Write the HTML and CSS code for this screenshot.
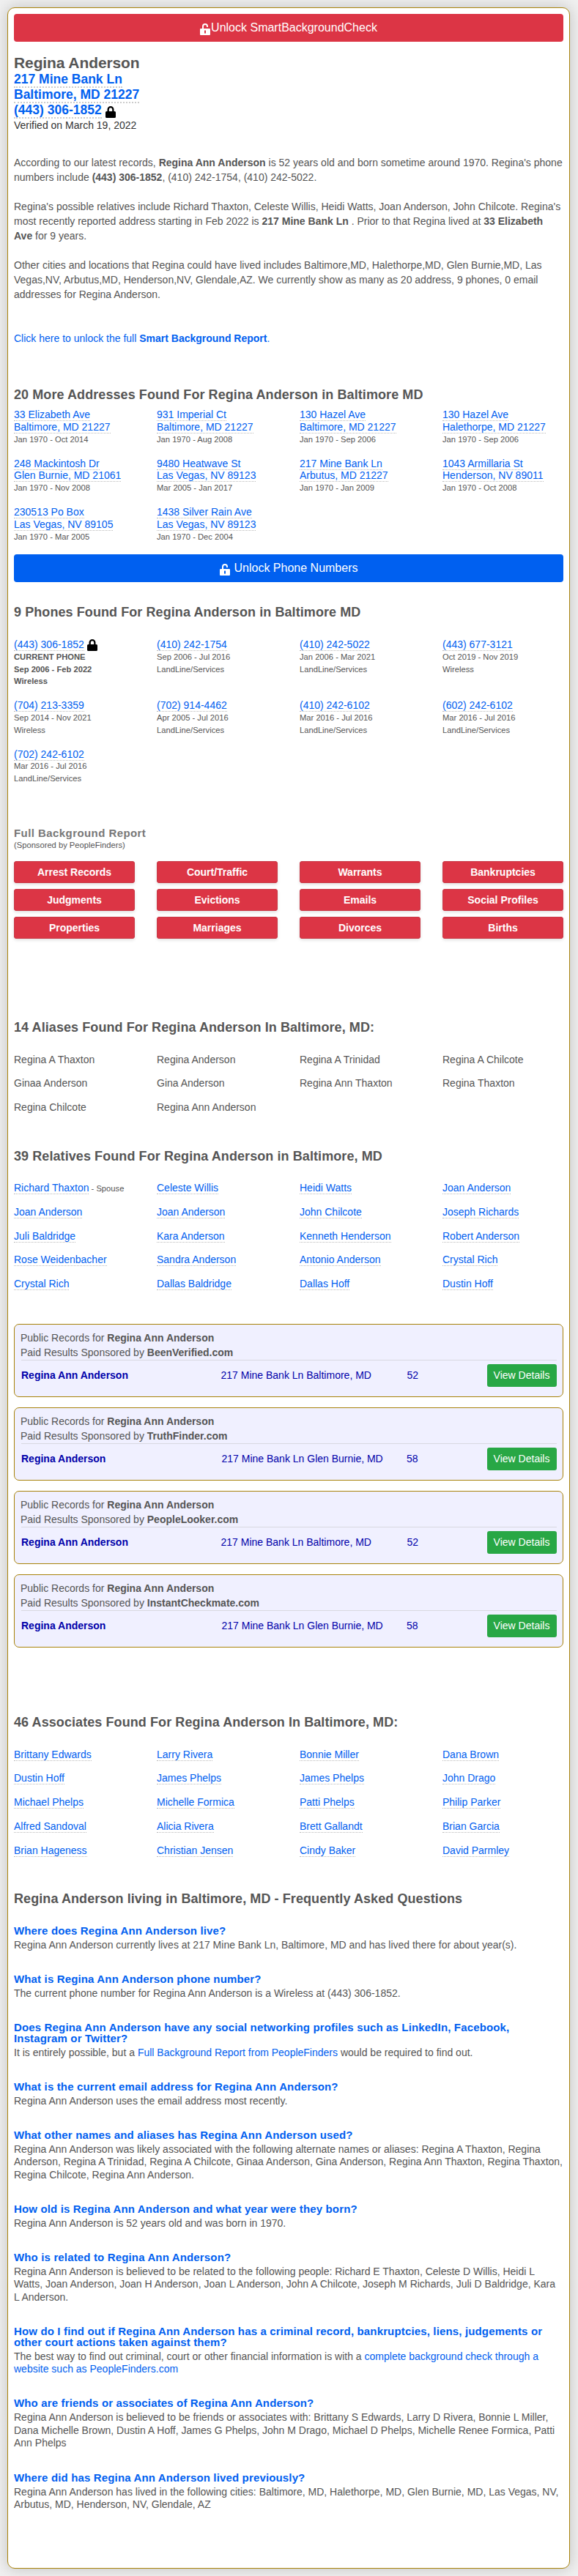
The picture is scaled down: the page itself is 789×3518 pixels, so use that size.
FILE: index.html
```html
<!DOCTYPE html>
<html lang="en">
<head>
<meta charset="utf-8">
<title>Regina Anderson</title>
<link rel="stylesheet" href="styles.css">
</head>
<body>
<svg class="defs" aria-hidden="true">
<symbol id="open" viewBox="0 0 14 16"><path fill="currentColor" fill-rule="evenodd" d="M1 7H3V4A4 4 0 0 1 11 4V5H9V4A2 2 0 0 0 5 4V7H13Q14 7 14 8V15Q14 16 13 16H1Q0 16 0 15V8Q0 7 1 7ZM6 9.5V13.5H8V9.5Z"/></symbol>
<symbol id="closed" viewBox="0 0 14 16"><path fill="currentColor" fill-rule="evenodd" d="M1.5 7H2.5V4.5A4.5 4.5 0 0 1 11.500 4.500V7H12.500Q14 7 14 8.500V14.500Q14 16 12.500 16H1.500Q0 16 0 14.500V8.500Q0 7 1.500 7ZM4.800 7H9.200V4.500A2.200 2.200 0 0 0 4.800 4.500Z"/></symbol>
</svg>
<main class="card">
<a class="bar red"><svg class="lock"><use href="#open"/></svg>Unlock SmartBackgroundCheck</a>
<h1>Regina Anderson</h1>
<div class="contact"><div><a class="dot">217 Mine Bank Ln</a></div><div><a class="dot">Baltimore, MD 21227</a></div><div><a class="dot">(443) 306-1852</a> <svg class="lock black"><use href="#closed"/></svg></div></div>
<div class="verified">Verified on March 19, 2022</div>
<div class="bio">
<p>According to our latest records, <b>Regina Ann Anderson</b> is 52 years old and born sometime around 1970. Regina's phone numbers include <b>(443) 306-1852</b>, (410) 242-1754, (410) 242-5022.</p>
<p>Regina's possible relatives include Richard Thaxton, Celeste Willis, Heidi Watts, Joan Anderson, John Chilcote. Regina's most recently reported address starting in Feb 2022 is <b>217 Mine Bank Ln</b> . Prior to that Regina lived at <b>33 Elizabeth Ave</b> for 9 years.</p>
<p>Other cities and locations that Regina could have lived includes Baltimore,MD, Halethorpe,MD, Glen Burnie,MD, Las Vegas,NV, Arbutus,MD, Henderson,NV, Glendale,AZ. We currently show as many as 20 address, 9 phones, 0 email addresses for Regina Anderson.</p>
<p class="unlock"><a>Click here to unlock the full <b>Smart Background Report</b>.</a></p>
</div>
<h2 class="h-addr">20 More Addresses Found For Regina Anderson in Baltimore MD</h2>
<div class="grid addr">
<div><a class="dot">33 Elizabeth Ave</a><br><a class="dot">Baltimore, MD 21227</a><small>Jan 1970 - Oct 2014</small></div>
<div><a class="dot">931 Imperial Ct</a><br><a class="dot">Baltimore, MD 21227</a><small>Jan 1970 - Aug 2008</small></div>
<div><a class="dot">130 Hazel Ave</a><br><a class="dot">Baltimore, MD 21227</a><small>Jan 1970 - Sep 2006</small></div>
<div><a class="dot">130 Hazel Ave</a><br><a class="dot">Halethorpe, MD 21227</a><small>Jan 1970 - Sep 2006</small></div>
<div><a class="dot">248 Mackintosh Dr</a><br><a class="dot">Glen Burnie, MD 21061</a><small>Jan 1970 - Nov 2008</small></div>
<div><a class="dot">9480 Heatwave St</a><br><a class="dot">Las Vegas, NV 89123</a><small>Mar 2005 - Jan 2017</small></div>
<div><a class="dot">217 Mine Bank Ln</a><br><a class="dot">Arbutus, MD 21227</a><small>Jan 1970 - Jan 2009</small></div>
<div><a class="dot">1043 Armillaria St</a><br><a class="dot">Henderson, NV 89011</a><small>Jan 1970 - Oct 2008</small></div>
<div><a class="dot">230513 Po Box</a><br><a class="dot">Las Vegas, NV 89105</a><small>Jan 1970 - Mar 2005</small></div>
<div><a class="dot">1438 Silver Rain Ave</a><br><a class="dot">Las Vegas, NV 89123</a><small>Jan 1970 - Dec 2004</small></div>
</div>
<a class="bar blue"><svg class="lock wide"><use href="#open"/></svg>Unlock Phone Numbers</a>
<h2 class="h-phone">9 Phones Found For Regina Anderson in Baltimore MD</h2>
<div class="grid list">
<div><a class="dot">(443) 306-1852</a> <svg class="lock black"><use href="#closed"/></svg><small class="strong">CURRENT PHONE</small><small class="strong">Sep 2006 - Feb 2022</small><small class="strong">Wireless</small></div>
<div><a class="dot">(410) 242-1754</a><small>Sep 2006 - Jul 2016</small><small>LandLine/Services</small></div>
<div><a class="dot">(410) 242-5022</a><small>Jan 2006 - Mar 2021</small><small>LandLine/Services</small></div>
<div><a class="dot">(443) 677-3121</a><small>Oct 2019 - Nov 2019</small><small>Wireless</small></div>
<div><a class="dot">(704) 213-3359</a><small>Sep 2014 - Nov 2021</small><small>Wireless</small></div>
<div><a class="dot">(702) 914-4462</a><small>Apr 2005 - Jul 2016</small><small>LandLine/Services</small></div>
<div><a class="dot">(410) 242-6102</a><small>Mar 2016 - Jul 2016</small><small>LandLine/Services</small></div>
<div><a class="dot">(602) 242-6102</a><small>Mar 2016 - Jul 2016</small><small>LandLine/Services</small></div>
<div><a class="dot">(702) 242-6102</a><small>Mar 2016 - Jul 2016</small><small>LandLine/Services</small></div>
</div>
<h3>Full Background Report</h3>
<div class="sponsor">(Sponsored by PeopleFinders)</div>
<div class="topics"><a>Arrest Records</a><a>Court/Traffic</a><a>Warrants</a><a>Bankruptcies</a><a>Judgments</a><a>Evictions</a><a>Emails</a><a>Social Profiles</a><a>Properties</a><a>Marriages</a><a>Divorces</a><a>Births</a></div>
<h2 class="h-alias">14 Aliases Found For Regina Anderson In Baltimore, MD:</h2>
<div class="grid list"><div>Regina A Thaxton</div><div>Regina Anderson</div><div>Regina A Trinidad</div><div>Regina A Chilcote</div><div>Ginaa Anderson</div><div>Gina Anderson</div><div>Regina Ann Thaxton</div><div>Regina Thaxton</div><div>Regina Chilcote</div><div>Regina Ann Anderson</div></div>
<h2 class="h-rel">39 Relatives Found For Regina Anderson in Baltimore, MD</h2>
<div class="grid list rel">
<div><a class="dot">Richard Thaxton</a><span class="tag"> - Spouse</span></div><div><a class="dot">Celeste Willis</a></div><div><a class="dot">Heidi Watts</a></div><div><a class="dot">Joan Anderson</a></div>
<div><a class="dot">Joan Anderson</a></div><div><a class="dot">Joan Anderson</a></div><div><a class="dot">John Chilcote</a></div><div><a class="dot">Joseph Richards</a></div>
<div><a class="dot">Juli Baldridge</a></div><div><a class="dot">Kara Anderson</a></div><div><a class="dot">Kenneth Henderson</a></div><div><a class="dot">Robert Anderson</a></div>
<div><a class="dot">Rose Weidenbacher</a></div><div><a class="dot">Sandra Anderson</a></div><div><a class="dot">Antonio Anderson</a></div><div><a class="dot">Crystal Rich</a></div>
<div><a class="dot">Crystal Rich</a></div><div><a class="dot">Dallas Baldridge</a></div><div><a class="dot">Dallas Hoff</a></div><div><a class="dot">Dustin Hoff</a></div>
</div>
<div class="records">
<section class="record"><div>Public Records for <b>Regina Ann Anderson</b></div><div>Paid Results Sponsored by <b>BeenVerified.com</b></div><div class="row"><b>Regina Ann Anderson</b><span>217 Mine Bank Ln Baltimore, MD</span><span>52</span><a class="view">View Details</a></div></section>
<section class="record"><div>Public Records for <b>Regina Ann Anderson</b></div><div>Paid Results Sponsored by <b>TruthFinder.com</b></div><div class="row alt"><b>Regina Anderson</b><span>217 Mine Bank Ln Glen Burnie, MD</span><span>58</span><a class="view">View Details</a></div></section>
<section class="record"><div>Public Records for <b>Regina Ann Anderson</b></div><div>Paid Results Sponsored by <b>PeopleLooker.com</b></div><div class="row"><b>Regina Ann Anderson</b><span>217 Mine Bank Ln Baltimore, MD</span><span>52</span><a class="view">View Details</a></div></section>
<section class="record"><div>Public Records for <b>Regina Ann Anderson</b></div><div>Paid Results Sponsored by <b>InstantCheckmate.com</b></div><div class="row alt"><b>Regina Anderson</b><span>217 Mine Bank Ln Glen Burnie, MD</span><span>58</span><a class="view">View Details</a></div></section>
</div>
<h2 class="h-assoc">46 Associates Found For Regina Anderson In Baltimore, MD:</h2>
<div class="grid list">
<div><a class="dot">Brittany Edwards</a></div><div><a class="dot">Larry Rivera</a></div><div><a class="dot">Bonnie Miller</a></div><div><a class="dot">Dana Brown</a></div>
<div><a class="dot">Dustin Hoff</a></div><div><a class="dot">James Phelps</a></div><div><a class="dot">James Phelps</a></div><div><a class="dot">John Drago</a></div>
<div><a class="dot">Michael Phelps</a></div><div><a class="dot">Michelle Formica</a></div><div><a class="dot">Patti Phelps</a></div><div><a class="dot">Philip Parker</a></div>
<div><a class="dot">Alfred Sandoval</a></div><div><a class="dot">Alicia Rivera</a></div><div><a class="dot">Brett Gallandt</a></div><div><a class="dot">Brian Garcia</a></div>
<div><a class="dot">Brian Hageness</a></div><div><a class="dot">Christian Jensen</a></div><div><a class="dot">Cindy Baker</a></div><div><a class="dot">David Parmley</a></div>
</div>
<h2 class="h-faq">Regina Anderson living in Baltimore, MD - Frequently Asked Questions</h2>
<div class="faq">
<h4>Where does Regina Ann Anderson live?</h4><p>Regina Ann Anderson currently lives at 217 Mine Bank Ln, Baltimore, MD and has lived there for about year(s).</p>
<h4>What is Regina Ann Anderson phone number?</h4><p>The current phone number for Regina Ann Anderson is a Wireless at (443) 306-1852.</p>
<h4>Does Regina Ann Anderson have any social networking profiles such as LinkedIn, Facebook,<br>Instagram or Twitter?</h4><p>It is entirely possible, but a <a>Full Background Report from PeopleFinders</a> would be required to find out.</p>
<h4>What is the current email address for Regina Ann Anderson?</h4><p>Regina Ann Anderson uses the email address most recently.</p>
<h4>What other names and aliases has Regina Ann Anderson used?</h4><p>Regina Ann Anderson was likely associated with the following alternate names or aliases: Regina A Thaxton, Regina<br>Anderson, Regina A Trinidad, Regina A Chilcote, Ginaa Anderson, Gina Anderson, Regina Ann Thaxton, Regina Thaxton,<br>Regina Chilcote, Regina Ann Anderson.</p>
<h4>How old is Regina Ann Anderson and what year were they born?</h4><p>Regina Ann Anderson is 52 years old and was born in 1970.</p>
<h4>Who is related to Regina Ann Anderson?</h4><p>Regina Ann Anderson is believed to be related to the following people: Richard E Thaxton, Celeste D Willis, Heidi L<br>Watts, Joan Anderson, Joan H Anderson, Joan L Anderson, John A Chilcote, Joseph M Richards, Juli D Baldridge, Kara<br>L Anderson.</p>
<h4>How do I find out if Regina Ann Anderson has a criminal record, bankruptcies, liens, judgements or<br>other court actions taken against them?</h4><p>The best way to find out criminal, court or other financial information is with a <a>complete background check through a<br>website such as PeopleFinders.com</a></p>
<h4>Who are friends or associates of Regina Ann Anderson?</h4><p>Regina Ann Anderson is believed to be friends or associates with: Brittany S Edwards, Larry D Rivera, Bonnie L Miller,<br>Dana Michelle Brown, Dustin A Hoff, James G Phelps, John M Drago, Michael D Phelps, Michelle Renee Formica, Patti<br>Ann Phelps</p>
<h4>Where did has Regina Ann Anderson lived previously?</h4><p>Regina Ann Anderson has lived in the following cities: Baltimore, MD, Halethorpe, MD, Glen Burnie, MD, Las Vegas, NV,<br>Arbutus, MD, Henderson, NV, Glendale, AZ</p>
</div>
</main>
</body>
</html>
```
FILE: styles.css
```css
* { box-sizing: border-box; }
html { background: #f0f0f0; }
body { margin: 0; padding: 10px 11px 10px 10px; font: 14px/20px Arial, "Liberation Sans", sans-serif; color: #555; }
h1, h2, h3, h4, p { margin: 0; }
a { color: #0060f0; text-decoration: none; }
.defs { display: none; }
.card { display: flow-root; height: 3498px; padding: 8px; background: #fff; border: 1px solid #a8820a; border-radius: 10px; box-shadow: 0 0 20px rgba(0, 0, 0, .2); }
.bar { display: flex; align-items: center; justify-content: center; height: 38px; border-radius: 4px; color: #fff; font-size: 16px; }
.red { background: #dc3545; }
.blue { background: #0060f0; }
.lock { width: 14px; height: 16px; margin: 3px 1px 0 0; flex: none; }
.lock.wide { margin-right: 6px; }
.lock.black { display: inline-block; color: #000; margin: 0; height: 16px; vertical-align: -5px; }
.dot { border-bottom: 1px dotted #bbb; }
h1 { margin-top: 17px; font-size: 21px; line-height: 23px; letter-spacing: -.1px; }
.contact { margin-top: .5px; font-size: 17.5px; line-height: 21px; font-weight: bold; }
.contact > div { height: 21px; }
.contact .dot { border-bottom: 2px dotted #ccc; }
.verified { color: #333; }
.bio { margin-top: 31px; }
.bio p { margin-bottom: 20px; }
.bio .unlock { margin: 40px 0 0; }
h2 { font-size: 18px; line-height: 22px; margin-bottom: 24.6px; letter-spacing: .08px; white-space: nowrap; }
.h-addr { margin-top: 56px; margin-bottom: 8.8px; }
.h-phone { margin-top: 30px; }
.h-alias { margin-top: 110px; }
.h-rel { margin-top: 31px; margin-bottom: 24px; }
.h-assoc { margin-top: 91px; }
.h-faq { margin-top: 30px; margin-bottom: 25px; }
.grid { display: grid; grid-template-columns: repeat(4, 165px); column-gap: 30px; line-height: 16.8px; white-space: nowrap; }
.grid > div { padding-bottom: 16px; }
.grid small { display: block; font-size: 11.2px; }
.grid .lock { margin: -4px 0 -2px 0; vertical-align: -2px; }
.strong { font-weight: bold; }
.tag { font-size: 11.2px; line-height: 1; }
h3 { margin-top: 41px; font-size: 15px; line-height: 18px; letter-spacing: .43px; color: #777; }
.sponsor { font-size: 11.2px; line-height: 14px; }
.topics { display: grid; grid-template-columns: repeat(4, 165px); gap: 8px 30px; margin-top: 15px; }
.topics a { height: 30px; line-height: 31px; text-align: center; background: #dc3545; color: #fff; border-radius: 4px; font-weight: bold; box-shadow: inset 0 0 0 1px #c93a48, 0 2px 4px rgba(0, 0, 0, .12); }
.records { display: grid; gap: 14px; margin-top: 30px; }
.record { height: 100px; padding: 8px; border: 1px solid #a8820a; border-radius: 7px; background: #f0f0ff; }
.row { display: grid; grid-template-columns: 272.500px 254px 109px 95px; align-items: center; margin-left: 1px; padding-top: 5px; border-top: 1px solid #d8d8e0; color: #0000aa; line-height: 31px; }
.row.alt { grid-template-columns: 273.500px 252.500px 109.500px 95px; }
.view { height: 31px; border-radius: 3px; background: #28a745; color: #fff; text-align: center; }
.faq h4 { font-size: 15px; line-height: 15px; letter-spacing: .15px; margin-bottom: 4px; white-space: nowrap; }
.faq h4 { color: #0060f0; }
.faq p { line-height: 17.5px; margin-bottom: 29.56px; white-space: nowrap; }
```
